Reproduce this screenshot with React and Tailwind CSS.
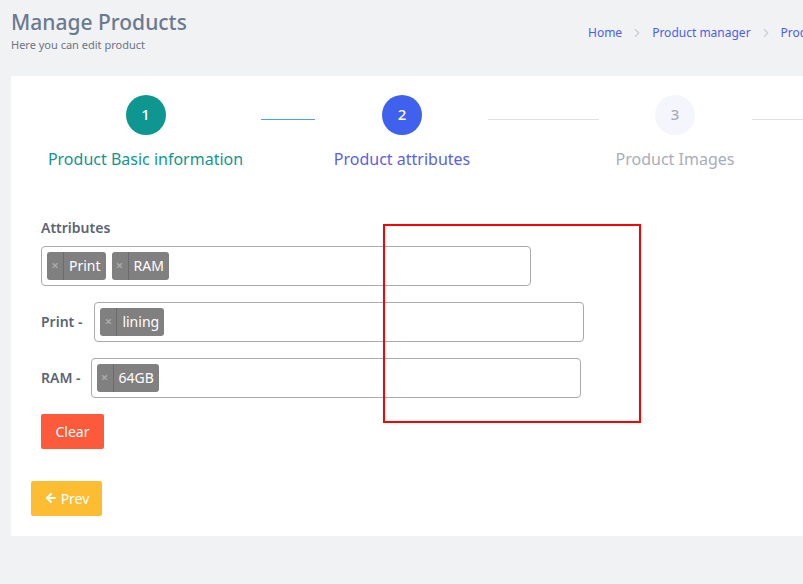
import { ArrowLeft, ChevronRight } from "lucide-react";

function Tag({ label }) {
  return (
    <span className="flex h-[28px] items-stretch rounded-[3px] bg-[#808080] text-[14px] text-white">
      <span className="flex w-[17px] items-center justify-center border-r border-[#6b6b6b] text-[13px] font-bold text-[#a9a9a9]">
        ×
      </span>
      <span className="flex items-center px-[5px]">{label}</span>
    </span>
  );
}

function TagInput({ tags, width }) {
  return (
    <div
      className="flex h-[40px] items-center gap-[6px] rounded-[4px] border border-[#aaaaaa] bg-white px-[5px]"
      style={{ width }}
    >
      {tags.map((t) => (
        <Tag key={t} label={t} />
      ))}
    </div>
  );
}

function Step({ num, label, width, circle, text }) {
  return (
    <div className="flex shrink-0 flex-col items-center" style={{ width }}>
      <div className={`flex h-[40px] w-[40px] items-center justify-center rounded-full text-[15px] font-medium ${circle}`}>
        {num}
      </div>
      <div className={`mt-[12px] whitespace-nowrap text-[16px] ${text}`}>{label}</div>
    </div>
  );
}

export default function App() {
  return (
    <div className="relative h-[584px] w-[803px] overflow-hidden bg-[#f1f2f4] font-['Noto_Sans',sans-serif]">
      {/* page header */}
      <div className="flex pl-[11px] pt-[9px]">
        <div className="w-[577px] shrink-0">
          <h1 className="text-[21px] font-medium leading-[26px] text-[#6a7a8f]">Manage Products</h1>
          <p className="mt-[2px] text-[11px] text-[#6b7585]">Here you can edit product</p>
        </div>
        <div className="flex items-center gap-[8px] self-start whitespace-nowrap pt-[15px] text-[12px] text-[#4c5ef0]">
          <span>Home</span>
          <ChevronRight size={14} className="text-[#c9ccd2]" />
          <span>Product manager</span>
          <ChevronRight size={14} className="text-[#c9ccd2]" />
          <span>Product edit</span>
        </div>
      </div>

      {/* card */}
      <div className="ml-[11px] mt-[22px] h-[460px] w-[800px] bg-white">
        {/* stepper */}
        <div className="flex pl-[38px] pt-[19px]">
          <Step num="1" label="Product Basic information" width={193} circle="bg-[#0e9791] text-white" text="text-[#13968f]" />
          <div className="mx-[19px] mt-[24px] h-px w-[54px] shrink-0 bg-[#4aa0f8]" />
          <Step num="2" label="Product attributes" width={136} circle="bg-[#4060ee] text-white" text="text-[#5b5fe4]" />
          <div className="mx-[18px] mt-[24px] h-px w-[111px] shrink-0 bg-[#dfe0e4]" />
          <Step num="3" label="Product Images" width={116} circle="bg-[#f5f5fd] text-[#a8acb8]" text="text-[#a8adbb]" />
          <div className="ml-[19px] mt-[24px] h-px w-[80px] shrink-0 bg-[#dfe0e4]" />
        </div>

        {/* form */}
        <div className="pl-[30px] pt-[46px]">
          <label className="block text-[14px] font-semibold text-[#5b6573]">Attributes</label>
          <div className="mt-[8px]">
            <TagInput tags={["Print", "RAM"]} width={490} />
          </div>

          <div className="mt-[16px] flex items-center gap-[12px]">
            <span className="text-[14px] font-semibold text-[#5b6573]">Print -</span>
            <TagInput tags={["lining"]} width={490} />
          </div>

          <div className="mt-[16px] flex items-center gap-[10px]">
            <span className="text-[14px] font-semibold text-[#5b6573]">RAM -</span>
            <TagInput tags={["64GB"]} width={490} />
          </div>

          <button className="mt-[16px] h-[35px] w-[63px] rounded-[2px] bg-[#fd5a3b] text-[14px] text-white">
            Clear
          </button>
        </div>

        <div className="pl-[20px] pt-[32px]">
          <button className="flex h-[35px] w-[71px] items-center justify-center gap-[3px] rounded-[2px] bg-[#fdbd33] text-[14px] text-white">
            <ArrowLeft size={14} strokeWidth={3.5} />
            Prev
          </button>
        </div>
      </div>

      {/* annotation box */}
      <div className="absolute left-[383px] top-[224px] h-[199px] w-[258px] border-2 border-[#ff0000]" />
    </div>
  );
}
